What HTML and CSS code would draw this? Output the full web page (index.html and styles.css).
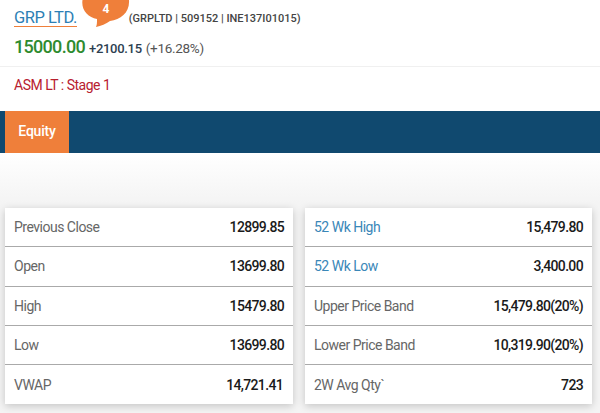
FILE: index.html
```html
<!DOCTYPE html>
<html lang="en">
<head>
    <meta charset="UTF-8">
    <title>GRP LTD.</title>
    <link rel="stylesheet" href="styles.css">
</head>
<body>
    <!-- Company header -->
    <div class="header">
        <div class="title-row">
            <span class="company">GRP LTD.</span>
            <span class="codes">(GRPLTD | 509152 | INE137I01015)</span>
            <div class="bubble">
                <svg width="48" height="28" viewBox="0 0 48 28">
                    <path fill="#ef7f3a" d="M0.5 0 C-1 10 6 17 15 19 C15 22 15 25 14 27 C19 26 24 24 28 21 C39 20 48 12 47 0 Z"/>
                </svg>
                <span class="bubble-count">4</span>
            </div>
        </div>
        <div class="price-row">
            <span class="price">15000.00</span>
            <span class="change">+2100.15</span>
            <span class="percent">(+16.28%)</span>
        </div>
    </div>

    <div class="asm">ASM LT : Stage 1</div>

    <!-- Tabs -->
    <div class="tabs">
        <div class="tab">Equity</div>
    </div>

    <!-- Quote tables -->
    <div class="quote">
        <div class="card">
            <div class="row"><span class="label">Previous Close</span><span class="value">12899.85</span></div>
            <div class="row"><span class="label">Open</span><span class="value">13699.80</span></div>
            <div class="row"><span class="label">High</span><span class="value">15479.80</span></div>
            <div class="row"><span class="label">Low</span><span class="value">13699.80</span></div>
            <div class="row"><span class="label">VWAP</span><span class="value vwap">14,721.41</span></div>
        </div>
        <div class="card">
            <div class="row"><span class="label link">52 Wk High</span><span class="value">15,479.80</span></div>
            <div class="row"><span class="label link">52 Wk Low</span><span class="value">3,400.00</span></div>
            <div class="row"><span class="label">Upper Price Band</span><span class="value">15,479.80(20%)</span></div>
            <div class="row"><span class="label">Lower Price Band</span><span class="value">10,319.90(20%)</span></div>
            <div class="row"><span class="label">2W Avg Qty`</span><span class="value">723</span></div>
        </div>
    </div>
</body>
</html>
```

FILE: styles.css
```css
body {
    margin: 0;
    height: 413px;
    overflow: hidden;
    background-color: #fff;
    font-family: Roboto, "Liberation Sans", sans-serif;
    color: #222;
}

/* Header */
.header {
    height: 66px;
    padding-left: 14px;
    border-bottom: 1px solid #f0f0f0;
}

.title-row {
    position: relative;
    display: flex;
    align-items: flex-start;
    height: 36px;
}

.company {
    margin-top: 9px;
    height: 17px;
    line-height: 17px;
    font-size: 16.5px;
    letter-spacing: -0.5px;
    color: #2d7fb5;
    border-bottom: 1px solid #ef7f3a;
}

.codes {
    margin-top: 12px;
    margin-left: 52px;
    line-height: 14px;
    font-size: 11px;
    font-weight: 500;
    color: #444;
}

.bubble {
    position: absolute;
    left: 68px;
    top: 0;
    width: 48px;
    height: 28px;
}

.bubble-count {
    position: absolute;
    left: 0;
    top: 2px;
    width: 48px;
    text-align: center;
    font-size: 12px;
    font-weight: 700;
    line-height: 14px;
    color: #fff;
}

.price-row {
    display: flex;
    align-items: baseline;
    height: 24px;
    line-height: 22px;
}

.price {
    font-size: 18px;
    font-weight: 500;
    letter-spacing: -0.7px;
    color: #2e8b2e;
}

.change {
    margin-left: 4px;
    font-size: 13px;
    font-weight: 500;
    letter-spacing: -0.3px;
    color: #2c3e50;
}

.percent {
    margin-left: 4px;
    font-size: 13.5px;
    letter-spacing: -0.3px;
    color: #555;
}

/* ASM line */
.asm {
    height: 44px;
    padding-left: 14px;
    line-height: 36px;
    font-size: 14px;
    letter-spacing: -0.5px;
    color: #b8202f;
}

/* Tabs */
.tabs {
    height: 42px;
    padding-left: 5px;
    background-color: #10496f;
}

.tab {
    width: 64px;
    height: 42px;
    line-height: 40px;
    text-align: center;
    font-size: 14px;
    font-weight: 500;
    letter-spacing: -0.2px;
    color: #fff;
    background-color: #ef7f3a;
}

/* Quote tables */
.quote {
    display: grid;
    grid-template-columns: 288px 287px;
    gap: 12px;
    height: 260px;
    padding: 55px 0 0 5px;
    box-sizing: border-box;
    background: linear-gradient(#fff, #f4f4f4 50px);
}

.card {
    height: 196px;
    background-color: #fff;
    box-shadow: 0 2px 8px rgba(0, 0, 0, 0.2);
}

.row {
    display: flex;
    justify-content: space-between;
    align-items: center;
    box-sizing: border-box;
    height: 39.25px;
    padding: 0 9px;
    border-bottom: 1px solid #aaa;
}

.row:last-child {
    border-bottom: none;
}

.label {
    font-size: 14px;
    letter-spacing: -0.5px;
    color: #666;
}

.link {
    color: #3a87b8;
}

.value {
    font-size: 14px;
    font-weight: 500;
    letter-spacing: -0.65px;
    color: #1a1a1a;
}

.vwap {
    margin-right: 1px;
}
```
